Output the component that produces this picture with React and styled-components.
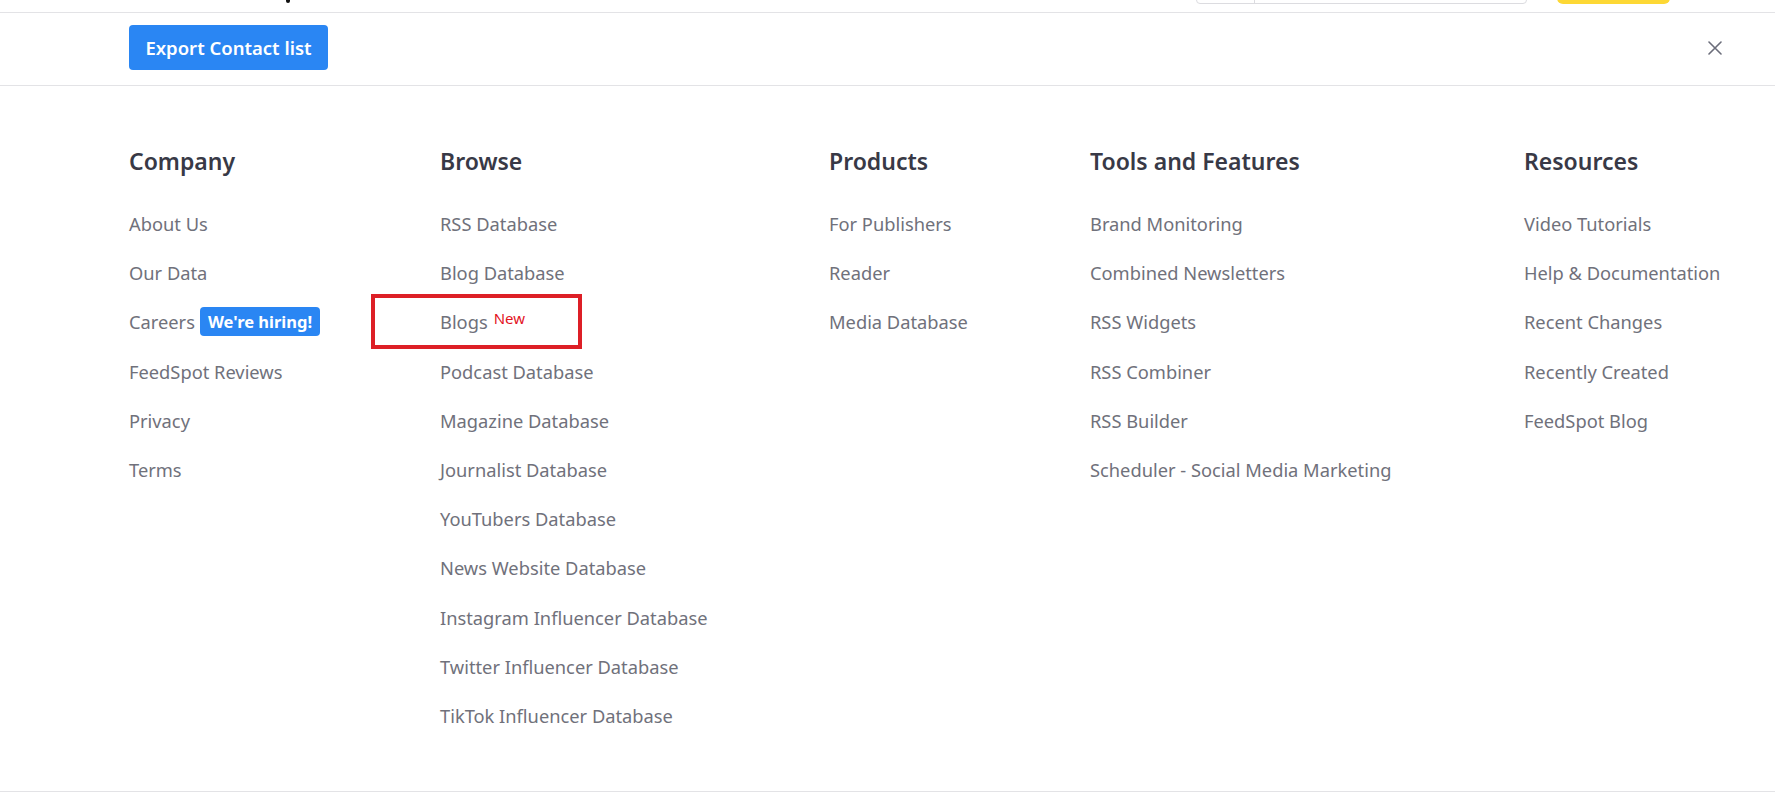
import React from "react";
import styled, { createGlobalStyle } from "styled-components";

const GlobalStyle = createGlobalStyle`
  html, body {
    margin: 0;
    padding: 0;
    background: #ffffff;
  }
  body {
    font-family: "Noto Sans", "Open Sans", Arial, sans-serif;
    -webkit-font-smoothing: antialiased;
  }
`;

const Page = styled.div`
  width: 100%;
  min-height: 796px;
  background: #fff;
`;

/* the navbar above is scrolled out of view, only its lower edge shows */
const NavStrip = styled.div`
  height: 12px;
  overflow: hidden;
  border-bottom: 1px solid #e3e3e6;
  display: flex;
  align-items: flex-end;
  position: relative;
`;

const LogoTail = styled.div`
  width: 4px;
  height: 3px;
  background: #111;
  border-radius: 0 0 2px 2px;
  margin: 0 0 9px 286px;
`;

const SearchBox = styled.div`
  display: flex;
  width: 331px;
  height: 40px;
  border: 1px solid #dcdce0;
  border-radius: 0 0 4px 4px;
  margin: 0 0 8px 906px;
  box-sizing: border-box;
`;

const SearchAddon = styled.div`
  width: 57px;
  border-right: 1px solid #dcdce0;
`;

const YellowButton = styled.div`
  width: 113px;
  height: 40px;
  background: #fdd835;
  border-radius: 0 0 6px 6px;
  margin: 0 0 8px 30px;
`;

const TopBar = styled.div`
  display: flex;
  align-items: center;
  justify-content: space-between;
  height: 72px;
  padding: 0 52px 0 129px;
  border-bottom: 1px solid #e3e3e6;
`;

const ExportButton = styled.button`
  width: 199px;
  height: 45px;
  margin-top: -3px;
  padding: 0;
  border: none;
  border-radius: 4px;
  background: #2a86f3;
  color: #fff;
  font-family: "Noto Sans", "Open Sans", Arial, sans-serif;
  font-size: 18.5px;
  font-weight: 600;
  cursor: pointer;
`;

const CloseButton = styled.button`
  width: 16px;
  height: 16px;
  padding: 0;
  border: none;
  background: none;
  margin-top: -2px;
  display: flex;
  align-items: center;
  justify-content: center;
  cursor: pointer;
`;

const Columns = styled.div`
  display: grid;
  grid-template-columns: 311px 389px 261px 434px 1fr;
  padding: 61px 0 51px 129px;
  border-bottom: 1px solid #e3e3e6;
`;

const Column = styled.div`
  display: flex;
  flex-direction: column;
`;

const Heading = styled.h3`
  margin: 0 0 23px;
  font-size: 23px;
  line-height: 29px;
  font-weight: 600;
  color: #383946;
  white-space: nowrap;
`;

const LinkRow = styled.div`
  position: relative;
  display: flex;
  align-items: center;
  height: 49.2px;
  white-space: nowrap;
`;

const Link = styled.a`
  font-size: 18.3px;
  color: #70717b;
  text-decoration: none;
  cursor: pointer;
`;

const HiringBadge = styled.span`
  display: inline-flex;
  align-items: center;
  height: 29px;
  margin-left: 5px;
  padding: 0 8px;
  border-radius: 4px;
  background: #2a86f3;
  color: #fff;
  font-size: 16.5px;
  font-weight: 700;
`;

const NewTag = styled.sup`
  margin-left: 6px;
  font-size: 15px;
  color: #e3141f;
  position: relative;
  top: -4px;
`;

const Highlight = styled.div`
  position: absolute;
  left: -69px;
  top: -3px;
  width: 211px;
  height: 55px;
  border: 4px solid #dd1f26;
  box-sizing: border-box;
  pointer-events: none;
`;

const columns = [
  {
    title: "Company",
    links: [
      { label: "About Us" },
      { label: "Our Data" },
      { label: "Careers", badge: "We're hiring!" },
      { label: "FeedSpot Reviews" },
      { label: "Privacy" },
      { label: "Terms" },
    ],
  },
  {
    title: "Browse",
    links: [
      { label: "RSS Database" },
      { label: "Blog Database" },
      { label: "Blogs", isNew: true, marked: true },
      { label: "Podcast Database" },
      { label: "Magazine Database" },
      { label: "Journalist Database" },
      { label: "YouTubers Database" },
      { label: "News Website Database" },
      { label: "Instagram Influencer Database" },
      { label: "Twitter Influencer Database" },
      { label: "TikTok Influencer Database" },
    ],
  },
  {
    title: "Products",
    links: [
      { label: "For Publishers" },
      { label: "Reader" },
      { label: "Media Database" },
    ],
  },
  {
    title: "Tools and Features",
    links: [
      { label: "Brand Monitoring" },
      { label: "Combined Newsletters" },
      { label: "RSS Widgets" },
      { label: "RSS Combiner" },
      { label: "RSS Builder" },
      { label: "Scheduler - Social Media Marketing" },
    ],
  },
  {
    title: "Resources",
    links: [
      { label: "Video Tutorials" },
      { label: "Help & Documentation" },
      { label: "Recent Changes" },
      { label: "Recently Created" },
      { label: "FeedSpot Blog" },
    ],
  },
];

const App = () => {
  return (
    <Page>
      <GlobalStyle />
      <NavStrip>
        <LogoTail />
        <SearchBox>
          <SearchAddon />
        </SearchBox>
        <YellowButton />
      </NavStrip>
      <TopBar>
        <ExportButton>Export Contact list</ExportButton>
        <CloseButton aria-label="Close">
          <svg width="14" height="14" viewBox="0 0 14 14">
            <path
              d="M1 1 L13 13 M13 1 L1 13"
              stroke="#6b6d7a"
              strokeWidth="1.6"
              strokeLinecap="round"
            />
          </svg>
        </CloseButton>
      </TopBar>
      <Columns>
        {columns.map((col) => (
          <Column key={col.title}>
            <Heading>{col.title}</Heading>
            {col.links.map((link) => (
              <LinkRow key={link.label}>
                <Link>{link.label}</Link>
                {link.badge && <HiringBadge>{link.badge}</HiringBadge>}
                {link.isNew && <NewTag>New</NewTag>}
                {link.marked && <Highlight />}
              </LinkRow>
            ))}
          </Column>
        ))}
      </Columns>
    </Page>
  );
};

export default App;
